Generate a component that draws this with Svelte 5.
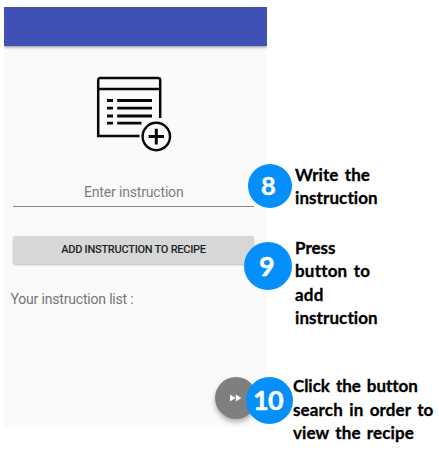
<script>
  const notes = [
    { n: '8', size: 44, cx: 269.5, cy: 186, x: 295, top: 162.5, fs: 25.5, lines: [['Write the', 75], ['instruction', 83]] },
    { n: '9', size: 48, cx: 268, cy: 265.5, x: 295, top: 235.5, fs: 27, lines: [['Press', 40.5], ['button to', 74.5], ['add', 28.5], ['instruction', 83]] },
    { n: '10', size: 47.5, cx: 269.5, cy: 400.3, x: 293, top: 374, fs: 27, lines: [['Click the button', 124], ['search in order to', 140.5], ['view the recipe', 121]] }
  ];

  // Adjusts letter spacing so that each label fills its column width.
  function fit(node, width) {
    const apply = () => {
      node.style.letterSpacing = '0px';
      const w = node.getBoundingClientRect().width;
      node.style.letterSpacing = (width - w) / node.textContent.length + 'px';
    };
    apply();
    document.fonts.ready.then(apply);
  }
</script>

<main>
  <section class="phone">
    <header></header>
    <svg class="list-icon" width="78" height="78" viewBox="0 0 78 78" fill="none" stroke="#080808">
      <path d="M44.5 61H3.2V5.2Q3.2 3 5.4 3H63Q65.2 3 65.2 5.2V43M3.2 14H65.2" stroke-width="2.5" />
      <path d="M12 25.5h6M22.2 25.5H57M12 33.2h6M22.2 33.2H57M12 41h6M22.2 41H57M12 48.2h6M22.2 48.2H46.5" stroke-width="2.8" />
      <circle cx="61.3" cy="61.5" r="13.7" stroke-width="2.4" />
      <path d="M61.3 53.8v15.6M53.6 61.6h15.4" stroke-width="3" />
    </svg>
    <div class="field"><span use:fit={99.5}>Enter instruction</span></div>
    <button class="add"><span use:fit={144.5}>ADD INSTRUCTION TO RECIPE</span></button>
    <p><span use:fit={123}>Your instruction list :</span></p>
    <button class="fab" aria-label="Next">
      <svg width="12" height="8" viewBox="0 0 12 8" fill="#fff"><path d="M0 .5 5.5 4 0 7.5zM5.8 .5 11.4 4 5.8 7.5z" /></svg>
    </button>
  </section>

  {#each notes as note}
    <div class="badge" style="width:{note.size}px;height:{note.size}px;left:{note.cx - note.size / 2}px;top:{note.cy - note.size / 2}px;font-size:{note.fs}px">{note.n}</div>
    <div class="note" style="left:{note.x}px;top:{note.top}px">
      {#each note.lines as [text, width]}
        <div><span use:fit={width}>{text}</span></div>
      {/each}
    </div>
  {/each}
</main>

<style>
  :global(body) { background: #fff; }
  main { position: relative; width: 439px; height: 451px; overflow: hidden; }
  span { display: inline-block; white-space: nowrap; }
  button { border: 0; padding: 0; }
  .phone {
    position: relative; box-sizing: border-box; display: flex; flex-direction: column;
    width: 263px; height: 427px; margin-left: 4px; border-top: 7px solid #fff;
    background: #fafafa; font-family: Roboto, sans-serif;
  }
  header { flex: none; height: 38.5px; background: #3f51b5; box-shadow: 0 1px 3px rgba(0, 0, 0, .45); clip-path: inset(0 0 -5px 0); }
  .list-icon { flex: none; margin: 29.5px 0 0 91px; }
  .field {
    box-sizing: border-box; width: 241px; height: 30px; margin: 23.5px 0 0 9px; padding-left: 71px;
    border-bottom: 1px solid #858585; color: #7d7d7d; font-size: 14px; line-height: 30px;
  }
  .add {
    flex: none; width: 241px; height: 28px; margin: 29px 0 0 9px; border-radius: 2px;
    background: #d6d7d7; box-shadow: 0 1px 2px rgba(0, 0, 0, .25);
    color: #222; font: 500 11px/27px Roboto, sans-serif;
  }
  p { margin: 25.5px 0 0 6.5px; color: #757575; font-size: 14px; line-height: 20px; }
  .fab {
    position: absolute; left: 211px; top: 370px; display: grid; place-items: center;
    width: 42px; height: 42px; border-radius: 50%; background: #7f7f7f;
    box-shadow: 0 3px 5px rgba(0, 0, 0, .3);
  }
  .badge {
    position: absolute; display: grid; place-items: center; border-radius: 50%; box-sizing: border-box; padding: 0 3px 1px 0;
    background: #058ffb; color: #fff; font-family: Lato, sans-serif; font-weight: 700; line-height: 1; letter-spacing: -.7px;
    -webkit-text-stroke: .4px #fff;
  }
  .note { position: absolute; color: #000; font: 700 17px/23.6px Lato, sans-serif; word-spacing: 2px; -webkit-text-stroke: .3px #000; }
  .note div { height: 23.6px; }
</style>
